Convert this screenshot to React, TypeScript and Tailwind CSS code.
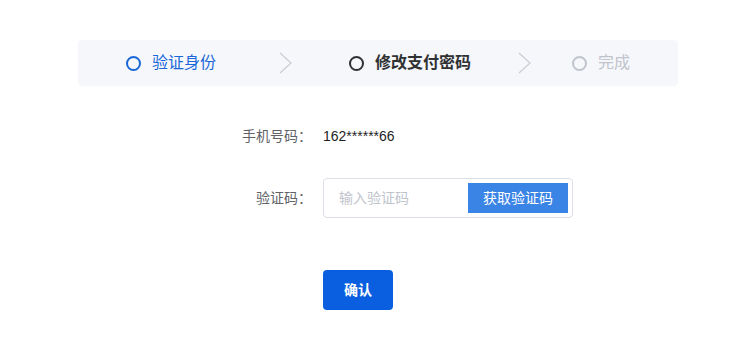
import React from "react"

const font = { fontFamily: '"Liberation Sans", "Noto Sans CJK SC", sans-serif' }

function Chevron() {
  return (
    <svg width="13" height="22" viewBox="0 0 13 22" className="shrink-0">
      <polyline points="1,1 12,11 1,21" fill="none" stroke="#c9ccd3" strokeWidth="1.2" />
    </svg>
  )
}

export default function App() {
  return (
    <div className="w-[749px] h-[354px] bg-white overflow-hidden" style={font}>
      {/* steps */}
      <div className="ml-[78px] mt-[40px] w-[600px] h-[46px] bg-[#f5f7fb] rounded-[4px] flex items-center">
        <span className="ml-[48px] w-[15px] h-[15px] rounded-full border-2 border-[#1a68d8] shrink-0" />
        <span className="ml-[11px] text-[16px] text-[#1a68d8] leading-none">验证身份</span>
        <span className="ml-[63px]">
          <Chevron />
        </span>
        <span className="ml-[57px] w-[15px] h-[15px] rounded-full border-2 border-[#303133] shrink-0" />
        <span className="ml-[11px] text-[16px] font-bold text-[#303133] leading-none">修改支付密码</span>
        <span className="ml-[47px]">
          <Chevron />
        </span>
        <span className="ml-[41px] w-[15px] h-[15px] rounded-full border-2 border-[#c0c4cc] shrink-0" />
        <span className="ml-[11px] text-[16px] text-[#c0c4cc] leading-none">完成</span>
      </div>

      {/* phone */}
      <div className="mt-[30px] h-[40px] flex items-center">
        <div className="ml-[212px] w-[100px] text-right text-[14px] text-[#606266]">手机号码：</div>
        <div className="ml-[11px] text-[14px] text-[#1f1f1f]">162******66</div>
      </div>

      {/* code */}
      <div className="mt-[22px] flex items-center">
        <div className="ml-[212px] w-[100px] text-right text-[14px] text-[#606266]">验证码：</div>
        <div className="ml-[11px] w-[250px] h-[40px] border border-[#dcdfe6] rounded-[4px] flex items-center pl-[15px] pr-[4px]">
          <input
            placeholder="输入验证码"
            className="flex-1 min-w-0 outline-none text-[14px] text-[#303133] placeholder:text-[#c0c4cc] bg-transparent"
            style={font}
          />
          <button
            type="button"
            className="w-[100px] h-[30px] bg-[#3a84e6] text-white text-[14px] shrink-0"
            style={font}
          >
            获取验证码
          </button>
        </div>
      </div>

      {/* confirm */}
      <div className="mt-[52px] ml-[323px]">
        <button
          type="button"
          className="w-[70px] h-[40px] bg-[#0a5fe0] rounded-[4px] text-white text-[14px] font-bold"
          style={font}
        >
          确认
        </button>
      </div>
    </div>
  )
}
